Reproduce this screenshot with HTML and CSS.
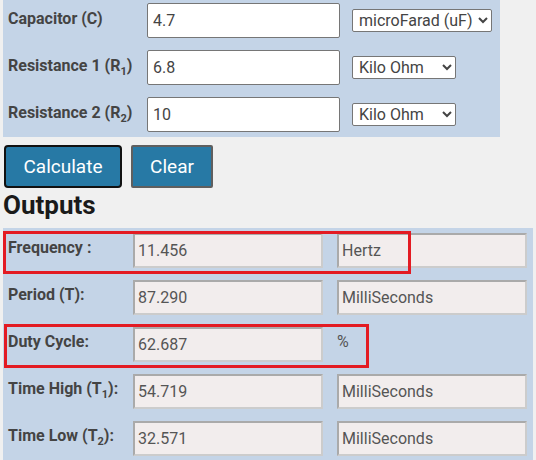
FILE: index.html
```html
<!DOCTYPE html>
<html>
<head>
<meta charset="utf-8">
<link rel="stylesheet" href="styles.css">
</head>
<body>
<div class="wrap">
  <div class="in-panel">
    <div class="in-row">
      <label class="in-label">Capacitor (C)</label>
      <input class="in-field" type="text" value="4.7">
      <select class="unit-sel sel-wide"><option>microFarad (uF)</option></select>
    </div>
    <div class="in-row">
      <label class="in-label">Resistance 1 (R<sub>1</sub>)</label>
      <input class="in-field" type="text" value="6.8">
      <select class="unit-sel sel-narrow"><option>Kilo Ohm</option></select>
    </div>
    <div class="in-row">
      <label class="in-label">Resistance 2 (R<sub>2</sub>)</label>
      <input class="in-field" type="text" value="10">
      <select class="unit-sel sel-narrow"><option>Kilo Ohm</option></select>
    </div>
  </div>

  <div class="buttons">
    <button class="btn btn-focus">Calculate</button>
    <button class="btn">Clear</button>
  </div>

  <h2 class="outputs-title">Outputs</h2>

  <div class="out-panel">
    <div class="out-row">
      <span class="out-label">Frequency :</span>
      <input class="out-field" type="text" value="11.456" readonly>
      <input class="out-field" type="text" value="Hertz" readonly>
    </div>
    <div class="out-row">
      <span class="out-label">Period (T):</span>
      <input class="out-field" type="text" value="87.290" readonly>
      <input class="out-field" type="text" value="MilliSeconds" readonly>
    </div>
    <div class="out-row">
      <span class="out-label">Duty Cycle:</span>
      <input class="out-field" type="text" value="62.687" readonly>
      <span class="out-unit">%</span>
    </div>
    <div class="out-row">
      <span class="out-label">Time High (T<sub>1</sub>):</span>
      <input class="out-field" type="text" value="54.719" readonly>
      <input class="out-field" type="text" value="MilliSeconds" readonly>
    </div>
    <div class="out-row">
      <span class="out-label">Time Low (T<sub>2</sub>):</span>
      <input class="out-field" type="text" value="32.571" readonly>
      <input class="out-field" type="text" value="MilliSeconds" readonly>
    </div>
    <div class="mark mark-freq"></div>
    <div class="mark mark-duty"></div>
  </div>
</div>
</body>
</html>
```

FILE: styles.css
```css
html, body {
  margin: 0;
  padding: 0;
  background: #f0f0f0;
  font-family: Roboto, "Liberation Sans", sans-serif;
  overflow: hidden;
}

.wrap {
  padding: 0 3px;
}

.in-panel {
  width: 492px;
  background: #c4d4e7;
  padding: 3px 0 5px 5px;
  display: flex;
  flex-direction: column;
  gap: 12px;
}

.in-row {
  display: grid;
  grid-template-columns: 127px 193px auto;
  column-gap: 12px;
  height: 35px;
  align-items: center;
}

.in-label {
  align-self: start;
  padding-top: 6px;
  font-size: 16px;
  font-weight: bold;
  color: #444;
  white-space: nowrap;
  line-height: 19px;
}

sub {
  font-size: 11px;
  line-height: 0;
}

.in-field {
  box-sizing: border-box;
  width: 193px;
  height: 35px;
  margin: 0;
  border: 1px solid #767676;
  border-radius: 2px;
  background: #fff;
  padding: 0 5px;
  font-family: Roboto, "Liberation Sans", sans-serif;
  font-size: 16px;
  color: #444;
}

.unit-sel {
  box-sizing: border-box;
  height: 23px;
  margin: 0;
  border: 1px solid #767676;
  border-radius: 2px;
  background: #fff;
  font-family: Roboto, "Liberation Sans", sans-serif;
  font-size: 16px;
  color: #444;
  padding: 0 0 0 2px;
}

.sel-wide { width: 140px; }
.sel-narrow { width: 104px; }

.buttons {
  display: flex;
  gap: 9px;
  margin-top: 8px;
  padding-left: 1px;
}

.btn {
  box-sizing: border-box;
  height: 43px;
  background: #2779a5;
  color: #fff;
  font-family: Roboto, "Liberation Sans", sans-serif;
  font-size: 19px;
  border: 2px solid #5f5f5f;
  border-radius: 2px;
  padding: 0;
  width: 82px;
}

.btn-focus {
  width: 118px;
  border-color: #111;
  border-radius: 4px;
}

.outputs-title {
  margin: 2px 0 8px 0;
  font-size: 26px;
  line-height: 30px;
  font-weight: bold;
  color: #1a1a1a;
}

.out-panel {
  position: relative;
  width: 525px;
  background: #c4d4e7;
  padding: 5px 0 10px 5px;
  display: flex;
  flex-direction: column;
  gap: 12px;
}

.out-row {
  display: grid;
  grid-template-columns: 111px 190px 190px;
  column-gap: 14px;
  height: 35px;
  align-items: start;
}

.out-label {
  padding-top: 5px;
  font-size: 16px;
  font-weight: bold;
  color: #444;
  white-space: nowrap;
  line-height: 19px;
}

.out-field {
  box-sizing: border-box;
  width: 190px;
  height: 35px;
  margin: 0;
  border: 2px solid;
  border-color: #aaa #ccc #ccc #aaa;
  background: #f2eded;
  padding: 0 3px;
  font-family: Roboto, "Liberation Sans", sans-serif;
  font-size: 16px;
  color: #555;
}

.out-unit {
  padding-top: 5px;
  font-size: 16px;
  line-height: 19px;
  color: #555;
}

.mark {
  position: absolute;
  box-sizing: border-box;
  border: 3px solid #e31b23;
}

.mark-freq {
  left: 0;
  top: 3px;
  width: 408px;
  height: 43px;
}

.mark-duty {
  left: 1px;
  top: 96px;
  width: 365px;
  height: 44px;
}
```
